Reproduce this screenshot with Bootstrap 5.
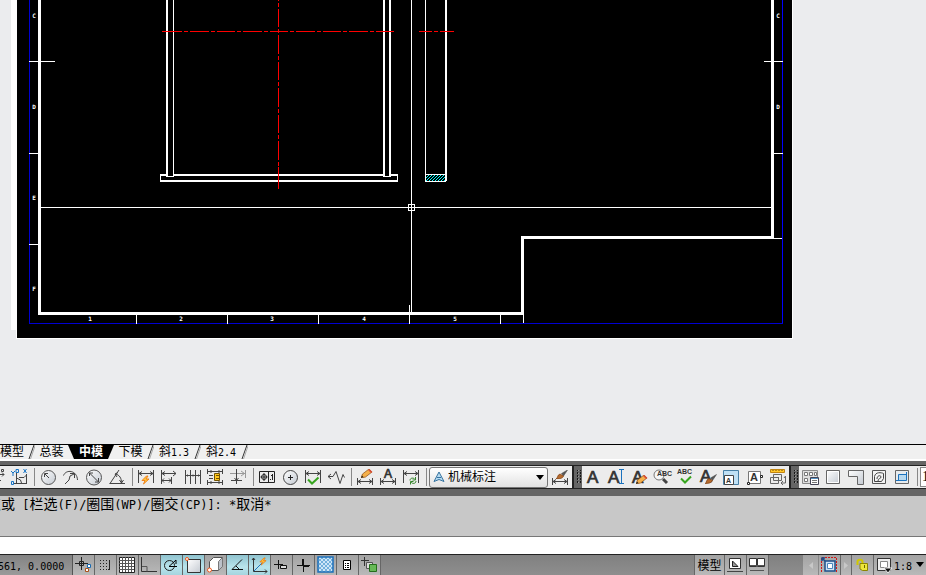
<!DOCTYPE html>
<html lang="zh-CN">
<head>
<meta charset="utf-8">
<meta name="viewport" content="width=device-width, initial-scale=1">
<title>中模</title>
<link href="https://cdn.jsdelivr.net/npm/bootstrap@5.3.0/dist/css/bootstrap.min.css" rel="stylesheet">
<style>
body{font-family:"Liberation Sans","Noto Sans CJK SC",sans-serif;font-size:12px;line-height:14px;color:#000;background:#ebecee}
svg{display:block;flex:none}
button{border:0;padding:0;background:none;color:inherit;flex:none}
.mono{font-family:"DejaVu Sans Mono","Noto Sans CJK SC",monospace}
.mono-sm{font-size:10px}
.stage{background:#ebecee;min-height:0}
.stage text{font:bold 6px "DejaVu Sans Mono",monospace;fill:#fff;text-anchor:middle}
.sheet-tabs{height:17px;background:#f0f0f0;border-top:1px solid #000;border-bottom:2px solid #fff}
.sheet-tab{height:14px;line-height:14px;white-space:nowrap;width:33px}
.sheet-tab.first{width:28px;text-align:left}
.sheet-tab.wide{width:40px}
.sheet-tab.current{width:46px;color:#fff;background:#000;clip-path:polygon(0 0,100% 0,40px 100%,6px 100%);font-weight:700}
.dock{background:#656565;padding:4px 0 7px}
.strip{background:#ececec;border:1px solid #222;height:24px}
.strip.open-start{border-left:0}
.strip.open-end{border-right:0;min-width:0}
.tool{width:23px;height:22px}
.tool.cut{width:8px}
.rule{width:6px;flex:none}
.rule::before{content:"";display:block;width:1px;height:18px;margin-left:3px;background:#888}
.grip{width:8px;flex:none;align-self:stretch;background:#656565}
.style-box{width:119px;height:21px;margin-right:1px;border:1px solid #777;border-radius:3px;background:linear-gradient(#fff,#e2e2e2);padding:0 3px}
.style-box select{appearance:none;border:0;background:none;padding:0 0 0 3px;font-size:12px;width:92px;min-width:0}
.scale-in{width:60px;height:20px;border:1px solid #888;background:#fff;padding:0 1px;font-family:"Liberation Serif",serif;font-size:14px}
.history{background:#c8c8c8;height:41px;border-bottom:1px solid #777;font-size:12px;line-height:16px}
.history p{margin:0 0 0 -13px}
.history b{font-weight:400;font-size:14px}
.prompt{height:17px;border:0;background:#fff;font-size:12px;outline:0;padding:0 4px}
.status{border-top:1px solid #222;height:21px;background:linear-gradient(#808080,#8e8e8e)}
.coords{width:73px;border-right:1px solid #555;background:linear-gradient(#838383,#9a9a9a);height:20px;line-height:23px;overflow:hidden;text-indent:-2px}
.st{width:22px;height:20px;border-right:1px solid #666;background:linear-gradient(#a3a3a3,#b9b9b9)}
.st.on{background:linear-gradient(#8fc3cf,#b9e4ec 60%,#a5d5df)}
.st.space{width:31px;border-left:1px solid #666;line-height:22px}
.quiet{width:34px}
.st.arrow-start{width:16px;border-color:#888}
.st.arrow-end{width:11px}
.scale-btn{height:20px;width:52px;background:linear-gradient(#a3a3a3,#b9b9b9)}
.d{stroke:#444;fill:none}
.a{fill:#333;stroke:#333;stroke-width:.7px;font:17px "Liberation Sans",sans-serif}
.a.mid{font-size:12px}
.tiny{fill:#333;font:bold 7px "Liberation Sans",sans-serif}
</style>
<script src="https://cdn.jsdelivr.net/npm/bootstrap@5.3.0/dist/js/bootstrap.bundle.min.js"></script>
</head>
<body class="d-flex flex-column vh-100 overflow-hidden">
<svg width="0" height="0" class="position-absolute" aria-hidden="true">
<defs>
<pattern id="chk" width="4" height="4" patternUnits="userSpaceOnUse"><path fill="#cfe6f7" d="M0 0h4v4h-4z"/><path fill="#72b0dc" d="M0 0h2v2h-2zM2 2h2v2h-2z"/></pattern>
<linearGradient id="sq" x1="0" y1="0" x2="1" y2="1"><stop stop-color="#fff"/><stop offset="1" stop-color="#c4cad2"/></linearGradient>
<symbol id="ends" viewBox="0 0 23 22"><path class="d" d="M3.500 4v13M18.500 4v13M4 7.500h14M7 5.500l-3 2 3 2M15 5.500l3 2-3 2"/></symbol>
<symbol id="base" viewBox="0 0 23 22"><path class="d" d="M3.500 12v7M18.500 12v7M4 15.500h14M7 13.500l-3 2 3 2M15 13.500l3 2-3 2"/></symbol>
<symbol id="pencil" viewBox="0 0 12 9"><path d="M0 9l1.500-4L8 0l3 3-6.500 5z" fill="#f5b04a" stroke="#8a4a12" stroke-width=".7"/><path d="M7 1l3 3 1.500-1L8.500 0z" fill="#d9503a"/><path d="M0 9l1-2.500 1.500 1.500z" fill="#222"/></symbol>
<symbol id="brush" viewBox="0 0 12 9"><path d="M11.500 0L5.500 3.500l2 2.500z" fill="#555" stroke="#444" stroke-width=".5"/><path d="M0 9c2-1 1-4 4-5l3.500 2C7 8.500 3 9 0 9z" fill="#b56a2f" stroke="#7a3d10" stroke-width=".7"/></symbol>
<symbol id="bolt" viewBox="0 0 9 10"><path d="M5.500 1L1 5.500h3L2.500 9 8 4H5L7 1z" fill="#ffc53b" stroke="#ee7a10" stroke-width=".9"/></symbol>
<pattern id="dots" width="3" height="3" patternUnits="userSpaceOnUse"><path fill="#161616" d="M0 0h1v2h-1z"/><path fill="#999" d="M1 1h1v1h-1z"/></pattern>
</defs>
</svg>

<main class="stage flex-grow-1 overflow-hidden">
<svg width="793" height="339" shape-rendering="crispEdges" role="img" aria-label="图纸">
<path fill="#fff" d="M11 0h6v330h-6zM16 0h777v339H16z"/>
<path d="M17 0h775v338H17z"/>
<path fill="#0000d2" d="M29 0h1v323h-1zM29 323h754v1H29z"/><path fill="#00f" d="M782 0h1v323h-1z"/>
<g fill="#fff">
<path d="M38 0h3v312h480v-76h250V0h3v239H524v76H38z"/>
<path d="M29 61h26v1H29zM29 153h9v1h-9zM29 244h9v1h-9zM764 61h19v1h-19zM774 153h9v1h-9zM774 238h8v1h-8z"/>
<path d="M136 315h1v9h-1zM227 315h1v9h-1zM318 315h1v9h-1zM409 305h1v19h-1zM500 315h1v9h-1zM523 315h1v8h-1z"/>
<path d="M160 174h238v8H160z"/><path fill="#000" d="M161 176h236v4H161z"/>
<path d="M166 0h8v177h-8zM383 0h8v177h-8z"/><path fill="#000" d="M168 0h5v176h-5zM385 0h4v176h-4z"/>
<path d="M425 0h1v182h-1zM445 0h2v181h-2zM425 174h21v1h-21zM425 181h21v1h-21z"/>
<path d="M41 207h730v1H41zM411 0h1v312h-1z"/>
</g>
<path d="M426 178l3-3M426 181l6-6M429 181l6-6M432 181l6-6M435 181l6-6M438 181l6-6M441 181l4-4M444 181l1-1" stroke="#0ff" shape-rendering="auto"/>
<path d="M408.500 204.500h6v6h-6z" fill="none" stroke="#fff"/>
<g stroke="#f00" fill="none">
<path stroke-dasharray="19 2 4 2 18 2 4 2" d="M278.500-18V166"/><path d="M278.500 167v22"/>
<path d="M162 31.500h20"/><path stroke-dasharray="4 2 19 2 4 2 18 2" d="M184 31.500h211"/><path d="M419 31.500h13M434 31.500h4M440 31.500h14"/>
</g>
<text x="34" y="18">C</text><text x="34" y="109">D</text><text x="34" y="200">E</text><text x="34" y="291">F</text>
<text x="778" y="18">C</text><text x="778" y="109">D</text>
<text x="90" y="321">1</text><text x="181" y="321">2</text><text x="272" y="321">3</text><text x="364" y="321">4</text><text x="455" y="321">5</text>
</svg>
</main>

<nav class="sheet-tabs d-flex flex-shrink-0" aria-label="布局">
<button class="sheet-tab first">模型</button>
<svg width="7" height="14"><path d="M1 14L6 0" stroke="#333"/><path d="M2.500 14L7 1" stroke="#aaa"/></svg>
<button class="sheet-tab">总装</button>
<button class="sheet-tab current">中模</button>
<button class="sheet-tab">下模</button>
<svg width="7" height="14"><path d="M1 14L6 0" stroke="#333"/><path d="M2.500 14L7 1" stroke="#aaa"/></svg>
<button class="sheet-tab wide">斜<span class="mono mono-sm">1.3</span></button>
<svg width="7" height="14"><path d="M1 14L6 0" stroke="#333"/><path d="M2.500 14L7 1" stroke="#aaa"/></svg>
<button class="sheet-tab wide">斜<span class="mono mono-sm">2.4</span></button>
<svg width="7" height="14"><path d="M1 14L6 0" stroke="#333"/><path d="M2.500 14L7 1" stroke="#aaa"/></svg>
</nav>

<div class="dock d-flex flex-shrink-0">
<div class="strip open-start d-flex align-items-center flex-shrink-0">
<button class="tool cut" aria-label="折弯"><svg width="8" height="22"><path class="d" d="M1.500 3.500h2v2h-2zM0 8.500h4M2 6.500l2 2-2 2M0 14.500h1"/></svg></button>
<button class="tool" aria-label="坐标标注"><svg width="23" height="22"><path class="d" d="M8.500 7v11M6 17.500h13M8.500 12l4 2 1 3M18.500 8v10M11 11.500h5l2.500-2.500"/><g stroke="#1673c4" fill="none"><path d="M3 5l2 2 2-2M5 7v3M8 3.500h2.500v3H8zM15.500 3l3 4M18.500 3l-3 4M3.500 15.500h2v3h-2z"/></g></svg></button>
<span class="rule"></span>
<button class="tool" aria-label="半径标注"><svg width="23" height="22"><circle cx="11.500" cy="11.500" r="7" fill="url(#sq)" stroke="#555"/><path class="d" d="M12 12L8 8M7.500 11V7.500H11"/></svg></button>
<button class="tool" aria-label="折弯半径"><svg width="23" height="22"><path class="d" d="M3.500 9.500C6 3 17 4 17.500 14M5 18l4-4 1-4 4-2M10 7.500h4.500V12"/></svg></button>
<button class="tool" aria-label="直径标注"><svg width="23" height="22"><circle cx="11" cy="11.500" r="7.500" fill="url(#sq)" stroke="#555"/><path class="d" d="M6 6.500l10 10M6.500 10V7H10M12 16h3.500v-4"/></svg></button>
<button class="tool" aria-label="角度标注"><svg width="23" height="22"><path class="d" d="M3.500 17.500h15.500M4 17.500L13 4M9.500 8c4 1 6 4 6 9M12 6.500L9 8l2 3M13.500 14l2 3 2-3"/></svg></button>
<span class="rule"></span>
<button class="tool" aria-label="快速标注"><svg width="23" height="22"><use href="#ends" width="23" height="22"/><use href="#bolt" x="6" y="9" width="9" height="10"/></svg></button>
<button class="tool" aria-label="基线标注"><svg width="23" height="22"><path class="d" d="M3.500 4v14M4 7.500h14M15 5l3 2.500-3 2.500M7 5.500l-3 2 3 2M4 14.500h10M13.500 11v7M6 12.500l-2 2 2 2M11 12.500l2 2-2 2"/></svg></button>
<button class="tool" aria-label="连续标注"><svg width="23" height="22"><path class="d" d="M4.500 4v14M9.500 4v14M14.500 4v14M19.500 4v14M5 9.500h14M6.500 8.500v2M12 8.500v2M17.500 8.500v2"/></svg></button>
<button class="tool" aria-label="标注间距"><svg width="23" height="22"><path class="d" d="M3.500 3v5M18.500 3v5M3.500 14v5M18.500 14v5M4 5.500h14M4 16.500h14M5 9.500h4M5 12.500h4M7 4v3M15 4v3M7 15v3M15 15v3"/><path d="M10.500 7.500h5v7h-5z" fill="#ffc81e" stroke="#735300"/><path d="M12 9.500h3M12 12.500h3" stroke="#735300"/></svg></button>
<button class="tool" aria-label="折断标注"><svg width="23" height="22"><path d="M3 7.500h15M14 5l3.500 2.500L14 10M18.500 4v8" stroke="#999" fill="none"/><path class="d" d="M9.500 3v15M4 14.500h11M7.500 12l2 2.500 2-2.500"/></svg></button>
<span class="rule"></span>
<button class="tool" aria-label="公差"><svg width="23" height="22"><path d="M3.500 5.500h15v11h-15zM12.500 5v12M8 7v8M4.500 11h7" stroke="#222" fill="none"/><circle cx="8" cy="11" r="2.500" fill="none" stroke="#222"/><path d="M16.500 8v6M15 9.500h1M14 13.500h1" stroke="#222"/></svg></button>
<button class="tool" aria-label="圆心标记"><svg width="23" height="22"><circle cx="11.500" cy="11.500" r="7" fill="url(#sq)" stroke="#444"/><path d="M11.500 9v5M9 11.500h5" stroke="#222"/></svg></button>
<button class="tool" aria-label="检验"><svg width="23" height="22"><use href="#ends" width="23" height="22"/><path d="M6 13.500l4 4 6.500-6" stroke="#37a51f" stroke-width="2" fill="none"/></svg></button>
<button class="tool" aria-label="折弯线性"><svg width="23" height="22"><path class="d" d="M3 10.500h5l3-5 4 12 3-9 1.500 3M6 8l-3 2.500L6 13"/></svg></button>
<span class="rule"></span>
<button class="tool" aria-label="编辑标注"><svg width="23" height="22"><use href="#base" width="23" height="22"/><use href="#pencil" x="7" y="3" width="12" height="9"/></svg></button>
<button class="tool" aria-label="编辑标注文字"><svg width="23" height="22"><use href="#base" width="23" height="22"/><text class="a mid" x="7" y="12">A</text></svg></button>
<button class="tool" aria-label="标注更新"><svg width="23" height="22"><use href="#ends" width="23" height="22"/><path d="M10 14.500c0-3 4-3 5-1M16 15c0 3-4 3-5 1M15.500 11v3h-3M10.500 18.500v-3h3" stroke="#34852b" fill="none"/></svg></button>
<span class="rule"></span>
<label class="style-box d-flex align-items-center flex-shrink-0">
<svg width="12" height="14"><path d="M6 2l5 9.500L6 9.500l-5 2zM4 7.500h4" fill="#b8dcf2" stroke="#35729f"/></svg>
<select aria-label="标注样式"><option>机械标注</option></select>
<svg width="8" height="5"><path d="M0 0h8L4 5z"/></svg>
</label>
<button class="tool" aria-label="标注样式管理"><svg width="23" height="22"><use href="#base" width="23" height="22"/><use href="#brush" x="7" y="4" width="12" height="9"/></svg></button>
</div>
<div class="strip d-flex align-items-center flex-shrink-0">
<span class="grip"><svg width="8" height="22"><path d="M2 4h5v13H2z" fill="url(#dots)"/></svg></span>
<button class="tool" aria-label="多行文字"><svg width="23" height="22"><text class="a" x="5" y="17">A</text></svg></button>
<button class="tool" aria-label="单行文字"><svg width="23" height="22"><text class="a" x="3" y="17">A</text><path d="M14 3.500h5M14 17.500h5M16.500 4v13" stroke="#1b72be" fill="none"/></svg></button>
<button class="tool" aria-label="编辑文字"><svg width="23" height="22"><text class="a" x="4" y="17">A</text><use href="#pencil" x="8" y="9" width="12" height="9"/></svg></button>
<button class="tool" aria-label="查找"><svg width="23" height="22"><circle cx="8" cy="9" r="5" fill="#f7f7f7" stroke="#777"/><path d="M12 13l4 4" stroke="#444" stroke-width="3"/><text class="tiny" x="6" y="10">ABC</text></svg></button>
<button class="tool" aria-label="拼写检查"><svg width="23" height="22"><text class="tiny" x="3" y="8">ABC</text><path d="M7 12.500l4 4 6-6" stroke="#37a51f" stroke-width="2" fill="none"/></svg></button>
<button class="tool" aria-label="文字样式"><svg width="23" height="22"><text class="a" x="3" y="16">A</text><use href="#brush" x="8" y="8" width="12" height="10"/></svg></button>
<button class="tool" aria-label="比例"><svg width="23" height="22"><path d="M3.500 4.500h15v14h-15z" fill="#bfe0f4" stroke="#477fa5"/><path d="M4.500 9.500h9v9h-9z" fill="#fff" stroke="#444"/><text class="tiny" x="6" y="17">A</text></svg></button>
<button class="tool" aria-label="对正"><svg width="23" height="22"><path d="M5.500 5.500h12v12h-12z" fill="#fff" stroke="#777"/><text x="7" y="15" font-size="11" font-weight="700" fill="#333">A</text><path d="M4.500 16.500h2v2h-2zM17.500 9.500h2v2h-2z" fill="#fff" stroke="#222"/></svg></button>
<button class="tool" aria-label="空间转换"><svg width="23" height="22"><path d="M4.500 3.500h14v3h-14z" fill="#ffc62a" stroke="#c08410"/><path d="M7 4v1M10 4v1M13 4v1M16 4v1" stroke="#744b00"/><path d="M7.500 8.500h8v6h-8zM4.500 11.500h8v6h-8zM9 11.500h4M19.500 10v7h-4M17 15l-2 2 2 2M18 12l1.500-2" fill="none" stroke="#666"/></svg></button>
</div>
<div class="strip open-end d-flex align-items-center flex-grow-1 overflow-hidden">
<span class="grip"><svg width="8" height="22"><path d="M2 4h5v13H2z" fill="url(#dots)"/></svg></span>
<button class="tool" aria-label="视口对话框"><svg width="23" height="22"><path d="M3.500 4.500h15v13h-15z" fill="#ddd" stroke="#888"/><path d="M5.500 6.500h3v3h-3zM10.500 6.500h3v3h-3zM15.500 6.500h2v3h-2zM5.500 12.500h3v3h-3z" fill="#fff" stroke="#777"/><path d="M11.500 11.500h8v7h-8z" fill="#fff" stroke="#445"/><path d="M12 12.500h7" stroke="#5590c0"/><path d="M13 14.500h5M13 16.500h5" stroke="#777"/></svg></button>
<button class="tool" aria-label="单个视口"><svg width="23" height="22"><path d="M4.500 4.500h13v13h-13z" fill="url(#sq)" stroke="#666"/><path d="M5.500 5.500h11v11h-11z" fill="none" stroke="#fff"/></svg></button>
<button class="tool" aria-label="多边形视口"><svg width="23" height="22"><path d="M3.500 4.500h15v14h-6v-8h-9z" fill="url(#sq)" stroke="#666"/></svg></button>
<button class="tool" aria-label="对象视口"><svg width="23" height="22"><path d="M4.500 4.500h13v13h-13z" fill="#f3f3f3" stroke="#555"/><path d="M6.500 15.500v-5c1-5 7-4 9-3v5l-2 3zM9 13c0-4 4-4 4-2s-3 1-3 4" fill="none" stroke="#444"/></svg></button>
<button class="tool" aria-label="剪裁视口"><svg width="23" height="22"><path d="M4.500 4.500h13v13h-13z" fill="#e7ebee" stroke="#666"/><path d="M7.500 8.500h8v6h-8z" fill="#b8d9ef" stroke="#1b72be"/><path d="M5 14.500h3M15.500 6v3" stroke="#1b72be"/></svg></button>
<span class="rule"></span>
<input class="scale-in flex-shrink-0" aria-label="视口比例" value="1:1">
</div>
</div>

<section class="history mono overflow-hidden flex-shrink-0 text-nowrap" aria-label="命令历史">
<p><b>点或</b> [<b>栏选</b>(F)/<b>圈围</b>(WP)/<b>圈交</b>(CP)]: *<b>取消</b>*</p>
</section>
<input class="prompt mono w-100 flex-shrink-0" aria-label="命令">

<footer class="status d-flex flex-shrink-0">
<span class="coords mono mono-sm flex-shrink-0">561, 0.0000</span>
<button class="st" aria-label="推断约束"><svg width="21" height="20"><path d="M8.500 2v13M2 8.500h13M6.500 6.500h4v4h-4z" stroke="#222" fill="none"/><path d="M14.500 9.500h3v3h-3z" fill="#fff" stroke="#1769b0"/><path d="M12.500 13.500h3v3h-3z" fill="#fff" stroke="#a8501a"/></svg></button>
<button class="st" aria-label="捕捉"><svg width="21" height="20"><path d="M5 5.500h11M5 8.500h11M5 11.500h11M5 14.500h8" stroke="#222" stroke-dasharray="1 2"/><path d="M14.500 5v9M13 14.500h2" stroke="#222"/></svg></button>
<button class="st" aria-label="栅格"><svg width="21" height="20"><path d="M2.500 2.500h15v15h-15z" fill="#fff" stroke="#222"/><path d="M5.500 2v15M8.500 2v15M11.500 2v15M14.500 2v15M2 5.500h15M2 8.500h15M2 11.500h15M2 14.500h15" stroke="#555"/></svg></button>
<button class="st" aria-label="正交"><svg width="21" height="20"><path d="M2.500 2v14.500H18" stroke="#333" fill="none"/><path d="M3 11.500h5v5" stroke="#555" fill="none"/></svg></button>
<button class="st on" aria-label="极轴"><svg width="21" height="20"><circle cx="8.500" cy="10.500" r="5" fill="none" stroke="#222"/><path d="M8 11.500h8M8 11.500L15 5v4" stroke="#000" fill="none"/></svg></button>
<button class="st on" aria-label="对象捕捉"><svg width="21" height="20"><path d="M4.500 4.500h13v13h-13z" fill="url(#sq)" stroke="#333"/><circle cx="4" cy="4" r="1.500" fill="#fff" stroke="#f2581b"/></svg></button>
<button class="st" aria-label="三维捕捉"><svg width="21" height="20"><path d="M4.500 6.500l4-4h9v9l-4 4h-9z" fill="#fff" stroke="#555"/><path d="M13.500 15.500v-9l4-4v9z" fill="#bcc1c9" stroke="#777"/><circle cx="4.500" cy="15" r="2" fill="#fff" stroke="#f2581b"/></svg></button>
<button class="st on" aria-label="对象追踪"><svg width="21" height="20"><path d="M15 4.500L5 14.500h11" stroke="#111" fill="none"/><path d="M9 11l3 3" stroke="#111"/></svg></button>
<button class="st on" aria-label="动态坐标系"><svg width="21" height="20"><path d="M4.500 3v13.500H18M3 5l1.500-2L6 5M16 14.500l2 2-2 2" stroke="#333" fill="none"/><path d="M5 16l8-8" stroke="#1b72be"/><use href="#bolt" x="10" y="2" width="8" height="9"/></svg></button>
<button class="st" aria-label="动态输入"><svg width="21" height="20"><path d="M7.500 5v9M3 9.500h9" stroke="#111"/><path d="M9.500 10.500h6v3h-6z" fill="#ddd" stroke="#111"/></svg></button>
<button class="st" aria-label="线宽"><svg width="21" height="20"><path d="M10.500 4v13M4 10.500h13" stroke="#111"/><path d="M10 4v6M10 11h6" stroke="#111" stroke-width="2"/></svg></button>
<button class="st" aria-label="透明度"><svg width="21" height="20"><path d="M3 2h15v15H3z" fill="url(#chk)"/><path d="M3 2h15v15H3z" fill="none" stroke="#1c6fb9" stroke-width="1.500"/></svg></button>
<button class="st" aria-label="快捷特性"><svg width="21" height="20"><path d="M6.500 5.500h7v9h-7z" fill="#fff" stroke="#000"/><path d="M8 8.500h1M8 10.500h1M8 12.500h1M10 8.500h2M10 10.500h2M10 12.500h2" stroke="#000"/></svg></button>
<button class="st" aria-label="选择循环"><svg width="21" height="20"><path d="M5.500 2v9M2 5.500h8" stroke="#333"/><path d="M7.500 7.500h6v6h-6z" fill="#ddd" stroke="#555"/><path d="M10.500 9.500h7v7h-7z" fill="#67b957" stroke="#246e1c"/></svg></button>
<span class="flex-grow-1"></span>
<button class="st space">模型</button>
<button class="st" aria-label="快速查看布局"><svg width="21" height="20"><path d="M4.500 3.500h11v10h-11z" fill="#fff" stroke="#333"/><path d="M7.500 6v5.500h5.500z" fill="#999" stroke="#222"/><path d="M2 16.500h16" stroke="#444"/></svg></button>
<button class="st" aria-label="快速查看图形"><svg width="21" height="20"><path d="M2.500 3.500h7v8h-7zM10.500 3.500h7v8h-7z" fill="#fff" stroke="#333"/><path d="M3 10.500h14M3 15.500h14" stroke="#555"/></svg></button>
<span class="quiet flex-shrink-0"></span>
<button class="st arrow-start" aria-label="上一个视口"><svg width="15" height="20"><path d="M10 7v7l-4-3.500z" fill="#c8c8c8"/></svg></button>
<button class="st" aria-label="最大化视口"><svg width="21" height="20"><path d="M2.500 17V2.500H17.500V17" fill="none" stroke="#d31717" stroke-dasharray="2 1"/><path d="M6 6h10v10H6z" fill="#cfe2f2" stroke="#1c4f8a" stroke-width="1.500"/><path d="M8.500 8.500h5v5h-5z" fill="#fff" stroke="#4a86bd"/><path d="M6 6L3 3M3 6V3h3" stroke="#1c4f8a" fill="none" stroke-width="1.500"/></svg></button>
<button class="st arrow-end" aria-label="下一个视口"><svg width="10" height="20"><path d="M3 7v7l4-3.500z" fill="#c8c8c8"/></svg></button>
<button class="st" aria-label="锁定"><svg width="21" height="20"><path d="M5.500 10V7c0-3 5-3 5 0v2" stroke="#d0c800" stroke-width="2" fill="none"/><path d="M8 8.500h7.500v7h-5L8 14z" fill="#ece63a" stroke="#8b8400"/><path d="M12.500 10v3" stroke="#6b6500"/></svg></button>
<button class="scale-btn d-flex align-items-center" aria-label="注释比例 1:8"><svg width="20" height="20"><path d="M3.500 3.500h13v12h-13z" fill="#eee" stroke="#333"/><path d="M6.500 6.500h7v6h-7z" fill="#fff" stroke="#888"/><path d="M10 13h8l-4 5z" fill="#111" stroke="#eee"/></svg><span class="mono mono-sm pt-1">1:8</span><svg class="ms-1" width="8" height="10"><path d="M0 2h8L4 7z"/></svg></button>
</footer>
</body>
</html>
